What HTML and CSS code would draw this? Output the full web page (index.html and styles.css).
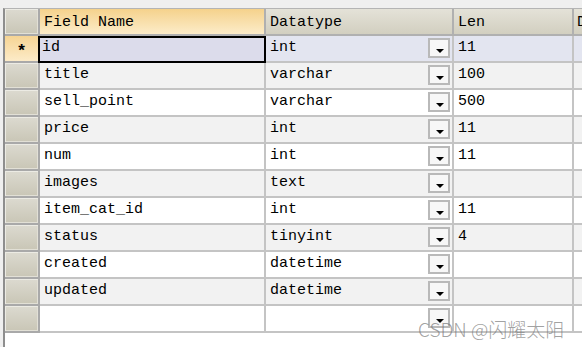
FILE: index.html
```html
<!DOCTYPE html>
<html lang="en">
<head>
  <meta charset="UTF-8">
  <title>Table Design</title>
  <link rel="stylesheet" href="styles.css">
</head>
<body>

  <!-- Field grid -->
  <div class="grid">
    <div class="row head">
      <div class="ind"></div>
      <div class="cell c-name active">Field Name</div>
      <div class="cell c-type">Datatype</div>
      <div class="cell c-len">Len</div>
      <div class="cell c-more">D</div>
    </div>

    <div class="row sel">
      <div class="ind cur">*</div>
      <div class="cell c-name focus">id</div>
      <div class="cell c-type">int<span class="drop"></span></div>
      <div class="cell c-len">11</div>
      <div class="cell c-more"></div>
    </div>
    <div class="row alt">
      <div class="ind"></div>
      <div class="cell c-name">title</div>
      <div class="cell c-type">varchar<span class="drop"></span></div>
      <div class="cell c-len">100</div>
      <div class="cell c-more"></div>
    </div>
    <div class="row">
      <div class="ind"></div>
      <div class="cell c-name">sell_point</div>
      <div class="cell c-type">varchar<span class="drop"></span></div>
      <div class="cell c-len">500</div>
      <div class="cell c-more"></div>
    </div>
    <div class="row alt">
      <div class="ind"></div>
      <div class="cell c-name">price</div>
      <div class="cell c-type">int<span class="drop"></span></div>
      <div class="cell c-len">11</div>
      <div class="cell c-more"></div>
    </div>
    <div class="row">
      <div class="ind"></div>
      <div class="cell c-name">num</div>
      <div class="cell c-type">int<span class="drop"></span></div>
      <div class="cell c-len">11</div>
      <div class="cell c-more"></div>
    </div>
    <div class="row alt">
      <div class="ind"></div>
      <div class="cell c-name">images</div>
      <div class="cell c-type">text<span class="drop"></span></div>
      <div class="cell c-len"></div>
      <div class="cell c-more"></div>
    </div>
    <div class="row">
      <div class="ind"></div>
      <div class="cell c-name">item_cat_id</div>
      <div class="cell c-type">int<span class="drop"></span></div>
      <div class="cell c-len">11</div>
      <div class="cell c-more"></div>
    </div>
    <div class="row alt">
      <div class="ind"></div>
      <div class="cell c-name">status</div>
      <div class="cell c-type">tinyint<span class="drop"></span></div>
      <div class="cell c-len">4</div>
      <div class="cell c-more"></div>
    </div>
    <div class="row">
      <div class="ind"></div>
      <div class="cell c-name">created</div>
      <div class="cell c-type">datetime<span class="drop"></span></div>
      <div class="cell c-len"></div>
      <div class="cell c-more"></div>
    </div>
    <div class="row alt">
      <div class="ind"></div>
      <div class="cell c-name">updated</div>
      <div class="cell c-type">datetime<span class="drop"></span></div>
      <div class="cell c-len"></div>
      <div class="cell c-more"></div>
    </div>
    <div class="row">
      <div class="ind"></div>
      <div class="cell c-name"></div>
      <div class="cell c-type"><span class="drop"></span></div>
      <div class="cell c-len"></div>
      <div class="cell c-more"></div>
    </div>
  </div>

  <div class="mark">CSDN @闪耀太阳</div>

</body>
</html>
```

FILE: styles.css
```css
* { margin: 0; padding: 0; box-sizing: border-box; }
body {
  width: 582px;
  height: 347px;
  overflow: hidden;
  background: #efefef;
  font-family: 'Liberation Mono', 'Noto Sans CJK SC', monospace;
  font-size: 15px;
  color: #000;
  position: relative;
}

.grid {
  margin: 8px 0 0 3px;
  height: 339px;
  border-left: 2px solid #8e8e8e;
  border-top: 1px solid #b4b4b4;
  background: #fff;
}

.row { display: flex; height: 27px; }
.row.alt .cell { background: #f2f2f2; }
.row.sel .cell { background: #e3e5f0; }

.cell {
  position: relative;
  height: 27px;
  padding: 2px 0 0 4px;
  line-height: 20px;
  white-space: nowrap;
  overflow: hidden;
  border-right: 2px solid #c4c4c4;
  border-bottom: 2px solid #c4c4c4;
  background: #fff;
}
.c-name { width: 226px; }
.c-type { width: 188px; }
.c-len { width: 120px; }
.c-more { flex: 1; border-right: none; padding-left: 3px; }

/* row indicators */
.ind {
  width: 35px;
  height: 27px;
  border: 2px solid #a9a9a9;
  border-left: none;
  border-top: none;
  box-shadow: inset 1px 1px 0 #ecebe4, inset -1px -1px 0 #e2e0d6;
  background: linear-gradient(#dcdad0, #c9c6b6);
  text-align: center;
  font-size: 17px;
  font-weight: bold;
  line-height: 32px;
}
.ind.cur { background: linear-gradient(#f6d493, #fcebc8); box-shadow: none; }

/* header */
.head .cell {
  background: linear-gradient(#e4e2d8, #d2cfc0);
  border-color: #b0b0b0;
  padding-top: 4px;
}
.head .cell.active { background: linear-gradient(#f5d28c, #fcecc9); }

/* focused cell */
.row.sel .cell.focus {
  background: #dcdceb;
  border: 2px solid #000;
  padding: 0 0 0 2px;
  width: 228px;
  margin-left: -2px;
}

/* datatype dropdown button */
.drop {
  position: absolute;
  right: 2px;
  top: 2px;
  width: 22px;
  height: 20px;
  border: 2px solid #b9b9b9;
  background: #f7f7f7;
}
.drop::after {
  content: "";
  position: absolute;
  left: 6px;
  top: 9px;
  border-left: 4px solid transparent;
  border-right: 4px solid transparent;
  border-top: 4px solid #000;
}

/* watermark */
.mark {
  position: absolute;
  left: 418px;
  top: 315px;
  font-family: 'Noto Sans CJK SC', sans-serif;
  font-size: 19px;
  font-weight: 300;
  color: rgba(120, 120, 120, 0.7);
  white-space: nowrap;
}
```
